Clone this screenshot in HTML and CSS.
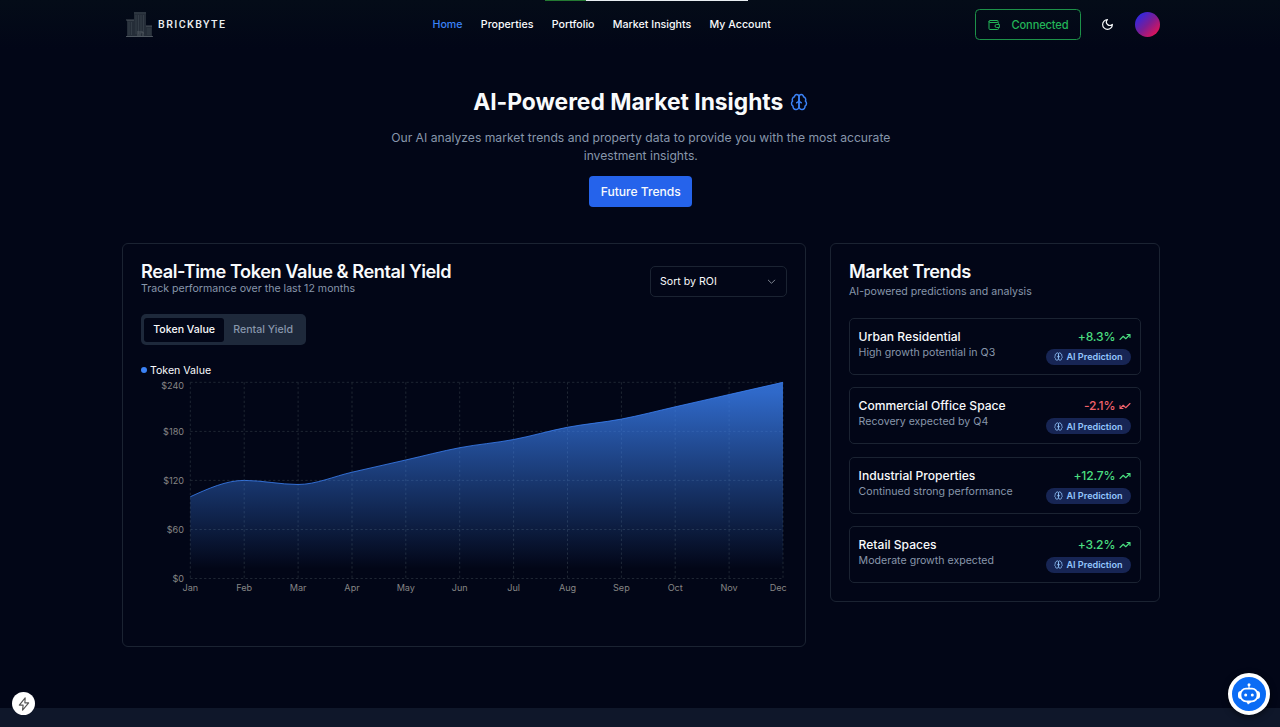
FILE: index.html
```
<!DOCTYPE html>
<html lang="en">
<head>
<meta charset="utf-8">
<title>BrickByte – Market Insights</title>
<link rel="stylesheet" href="styles.css">
</head>
<body>
<svg class="defs" width="0" height="0" aria-hidden="true">
  <symbol id="brain" viewBox="0 0 24 24"><path d="M12 5a3 3 0 1 0-5.997.125 4 4 0 0 0-2.526 5.77 4 4 0 0 0 .556 6.588A4 4 0 1 0 12 18Z"/><path d="M12 5a3 3 0 1 1 5.997.125 4 4 0 0 1 2.526 5.77 4 4 0 0 1-.556 6.588A4 4 0 1 1 12 18Z"/><path d="M15 13a4.5 4.5 0 0 1-3-4 4.5 4.5 0 0 1-3 4"/></symbol>
  <symbol id="up" viewBox="0 0 24 24"><path d="M22 7 13.500 15.500l-5-5L2 17M16 7h6v6"/></symbol>
  <symbol id="down" viewBox="0 0 24 24"><path d="M22 7 13.500 15.500l-5-5L2 17M8 17H2v-6"/></symbol>
</svg>
<div class="progress"><span class="progress-done"></span><span class="progress-rest"></span></div>
<header class="header">
  <div class="logo">
    <svg width="28" height="26" viewBox="0 0 28 26">
      <path class="b1" d="M1 8h7v17H1zM8 0h12v25H8zM20 14h6v11h-6z"/>
      <path class="b2" d="M8 1h12M10 3v19M12.500 3v19M15 3v19M17.500 3v19M3 10v13M5.500 10v13M22 16v7M24 16v7"/>
      <path class="b3" d="M0 8h8M20 14h6M0 24.500h27M11 20h6v4M12 21v3M14 21v3"/>
    </svg>
    <span class="brand">BRICKBYTE</span>
  </div>
  <nav class="nav"><a class="active">Home</a><a>Properties</a><a>Portfolio</a><a>Market Insights</a><a>My Account</a></nav>
  <div class="tools">
    <div class="connected">
      <svg class="icon" width="12" height="12" viewBox="0 0 24 24"><path d="M20 7V4a1 1 0 0 0-1-1H4a2 2 0 0 0-2 2c0 1.500 1 2 2 2h15a2 2 0 0 1 2 2v2M2 5v14a2 2 0 0 0 2 2h15a2 2 0 0 0 2-2v-2M22 11h-5a3 3 0 0 0 0 6h5z"/></svg>
      <span>Connected</span>
    </div>
    <svg class="icon moon" width="13" height="13" viewBox="0 0 24 24"><path d="M12 3a6 6 0 0 0 9 9 9 9 0 1 1-9-9Z"/></svg>
    <div class="avatar"></div>
  </div>
</header>
<main class="main">
  <section class="hero">
    <h1>AI-Powered Market Insights <svg class="icon blue" width="18" height="18"><use href="#brain"/></svg></h1>
    <p>Our AI analyzes market trends and property data to provide you with the most accurate<br>investment insights.</p>
    <button class="primary">Future Trends</button>
  </section>
  <div class="columns">
    <section class="card chart-card">
      <div class="card-head">
        <div><h2>Real-Time Token Value &amp; Rental Yield</h2><p class="sub">Track performance over the last 12 months</p></div>
        <div class="select"><span>Sort by ROI</span><svg class="icon" width="11" height="11" viewBox="0 0 24 24"><path d="m5 9 7 7 7-7"/></svg></div>
      </div>
      <div class="tabs"><span class="tab on">Token Value</span><span class="tab">Rental Yield</span></div>
      <div class="legend"><i></i>Token Value</div>
      <svg class="chart" width="646" height="220" viewBox="141 377 646 220">
        <defs><linearGradient id="fill" x1="0" y1="1" x2="0" y2="0"><stop offset="5%" stop-color="#3b82f6" stop-opacity=".8"/><stop offset="95%" stop-color="#3b82f6" stop-opacity="0"/></linearGradient></defs>
        <g class="grid"><path d="M190.300 382.300H783M190.300 431.400H783M190.300 480.400H783M190.300 529.500H783M190.300 578.500H783"/><path d="M190.300 382.300v196.200M244.200 382.300v196.200M298.100 382.300v196.200M352 382.300v196.200M405.800 382.300v196.200M459.700 382.300v196.200M513.600 382.300v196.200M567.500 382.300v196.200M621.400 382.300v196.200M675.200 382.300v196.200M729.100 382.300v196.200M783 382.300v196.200"/></g>
        <g transform="translate(190.300 578.500) scale(53.880 -.8175)">
          <path fill="url(#fill)" d="M0,100C.333,110 .667,120 1,120C1.333,120 1.667,115 2,115C2.333,115 2.667,125 3,130C3.333,135 3.667,140 4,145C4.333,150 4.667,155.833 5,160C5.333,164.167 5.667,165.833 6,170C6.333,174.167 6.667,180.833 7,185C7.333,189.167 7.667,190.833 8,195C8.333,199.167 8.667,205 9,210C9.333,215 9.667,220 10,225L11,240V0H0Z"/>
          <path class="line" d="M0,100C.333,110 .667,120 1,120C1.333,120 1.667,115 2,115C2.333,115 2.667,125 3,130C3.333,135 3.667,140 4,145C4.333,150 4.667,155.833 5,160C5.333,164.167 5.667,165.833 6,170C6.333,174.167 6.667,180.833 7,185C7.333,189.167 7.667,190.833 8,195C8.333,199.167 8.667,205 9,210C9.333,215 9.667,220 10,225L11,240"/>
        </g>
        <g class="ylab"><text x="184" y="388.500">$240</text><text x="184" y="434.500">$180</text><text x="184" y="483.500">$120</text><text x="184" y="532.500">$60</text><text x="184" y="581.700">$0</text></g>
        <g class="xlab"><text x="190.300" y="591.300">Jan</text><text x="244.200" y="591.300">Feb</text><text x="298.100" y="591.300">Mar</text><text x="352" y="591.300">Apr</text><text x="405.800" y="591.300">May</text><text x="459.700" y="591.300">Jun</text><text x="513.600" y="591.300">Jul</text><text x="567.500" y="591.300">Aug</text><text x="621.400" y="591.300">Sep</text><text x="675.200" y="591.300">Oct</text><text x="729.100" y="591.300">Nov</text><text x="778.200" y="591.300">Dec</text></g>
      </svg>
    </section>
    <section class="card trends">
      <h2>Market Trends</h2>
      <p class="sub">AI-powered predictions and analysis</p>
      <div class="list">
        <article class="item"><div><h3>Urban Residential</h3><p>High growth potential in Q3</p></div><div class="right"><span class="pct">+8.3% <svg class="icon" width="12" height="12"><use href="#up"/></svg></span><span class="badge"><svg class="icon" width="9" height="9"><use href="#brain"/></svg>AI Prediction</span></div></article>
        <article class="item"><div><h3>Commercial Office Space</h3><p>Recovery expected by Q4</p></div><div class="right"><span class="pct neg">-2.1% <svg class="icon" width="12" height="12"><use href="#down"/></svg></span><span class="badge"><svg class="icon" width="9" height="9"><use href="#brain"/></svg>AI Prediction</span></div></article>
        <article class="item"><div><h3>Industrial Properties</h3><p>Continued strong performance</p></div><div class="right"><span class="pct">+12.7% <svg class="icon" width="12" height="12"><use href="#up"/></svg></span><span class="badge"><svg class="icon" width="9" height="9"><use href="#brain"/></svg>AI Prediction</span></div></article>
        <article class="item"><div><h3>Retail Spaces</h3><p>Moderate growth expected</p></div><div class="right"><span class="pct">+3.2% <svg class="icon" width="12" height="12"><use href="#up"/></svg></span><span class="badge"><svg class="icon" width="9" height="9"><use href="#brain"/></svg>AI Prediction</span></div></article>
      </div>
    </section>
  </div>
</main>
<footer class="footer"></footer>
<div class="bolt"><svg class="icon" width="14" height="14" viewBox="0 0 24 24"><path d="M14 1.500 4 14h6.500L9.500 22.500 20 10h-6.500z"/></svg></div>
<div class="bot">
  <svg width="24" height="24" viewBox="0 0 24 24"><path class="stroke" d="M12 3.500v3"/><circle cx="12" cy="2.800" r="1.500"/><rect x="1" y="9" width="22" height="8" rx="3"/><rect class="face" x="3.500" y="6.700" width="17" height="12.600" rx="5.500"/><path d="M9 19h7l-5 3.500z"/><circle cx="8.700" cy="13" r="1.500"/><circle cx="15.300" cy="13" r="1.500"/></svg>
</div>
</body>
</html>
```
FILE: styles.css
```
* { box-sizing: border-box; margin: 0; padding: 0; }
body {
  height: 727px;
  overflow: hidden;
  display: flex;
  flex-direction: column;
  background: #020617;
  color: #f8fafc;
  font-family: Inter, "Liberation Sans", sans-serif;
  font-size: 10.6px;
}
.defs { position: absolute; }
.icon { fill: none; stroke: currentColor; stroke-width: 2; stroke-linecap: round; stroke-linejoin: round; }
.progress { position: absolute; top: 0; left: 545px; width: 203px; height: 1px; display: flex; }
.progress-done { width: 41px; background: #247a32; }
.progress-rest { flex: 1; background: #e8eef2; }

.header {
  height: 49px;
  padding: 0 120px 0 126px;
  display: grid;
  grid-template-columns: 306.5px 1fr auto;
  align-items: center;
  background: linear-gradient(#040c18, #020617);
}
.logo { display: flex; align-items: center; gap: 4px; }
.b1 { fill: #252d38; }
.b2 { fill: none; stroke: #39414b; stroke-width: .8; }
.b3 { fill: none; stroke: #5b626b; stroke-width: .8; }
.brand { font: 500 10.6px Roboto, sans-serif; letter-spacing: 1.45px; color: #eceef0; }
.nav { display: flex; gap: 18.3px; font-size: 10.65px; font-weight: 500; white-space: nowrap; }
.active { color: #3b82f6; }
.tools { display: flex; align-items: center; }
.connected {
  width: 106px; height: 31px;
  display: flex; align-items: center; justify-content: center; gap: 12px;
  border: 1px solid #1d9149; border-radius: 4.500px;
  color: #22b558; font-size: 11.1px; font-weight: 500; letter-spacing: -.14px;
}
.moon { margin-left: 20px; stroke-width: 2.2; }
.avatar { margin-left: 21px; width: 25px; height: 25px; border-radius: 50%; background: linear-gradient(135deg, #2929e8 10%, #7b1d94 50%, #ed1250 92%); }

.main { flex: 1; padding: 0 120.500px 0 122px; }
.hero { display: flex; flex-direction: column; align-items: center; padding-top: 39px; height: 194px; text-align: center; }
h1 { display: flex; align-items: center; gap: 7px; font-size: 22.8px; font-weight: 700; line-height: 27px; letter-spacing: -.01px; }
.blue { color: #3b82f6; }
.hero p { margin-top: 13.600px; font-size: 12.15px; line-height: 18.2px; color: #8796ab; }
.primary { margin-top: 11px; width: 103px; height: 31px; border: 0; border-radius: 4px; background: #2563eb; color: #f8fafc; font: 500 12.1px Inter, sans-serif; }

.columns { display: grid; grid-template-columns: 684px 330px; gap: 24px; align-items: start; }
.card { border: 1px solid #1b2332; border-radius: 6px; padding: 18px; }
.chart-card { height: 404px; }
h2 { font-size: 18.2px; font-weight: 600; line-height: 18px; letter-spacing: -.44px; }
.sub { margin-top: 1px; font-size: 10.6px; line-height: 15px; color: #8796ab; }
.card-head { display: flex; justify-content: space-between; align-items: flex-start; height: 52.4px; }
.select {
  width: 137px; height: 31px; margin-top: 3.600px; padding: 0 9.500px 0 9px;
  display: flex; align-items: center; justify-content: space-between;
  border: 1px solid #1b2332; border-radius: 5px;
}
.select .icon { color: #8a919d; }
.tabs { display: flex; width: 164.500px; height: 30.600px; padding: 3.300px; border-radius: 5px; background: #1e293b; font-weight: 500; }
.tab { width: 78.500px; display: flex; align-items: center; justify-content: center; color: #8796ab; }
.on { width: 80px; border-radius: 3px; background: #020617; color: #f8fafc; }
.legend { display: flex; align-items: center; gap: 3px; height: 13px; margin-top: 19px; }
.legend i { width: 6px; height: 6px; border-radius: 50%; background: #3b82f6; }
.chart { display: block; }
.grid { fill: none; stroke: #222a37; stroke-width: .9; stroke-dasharray: 2.3 2.3; }
.line { fill: none; stroke: #3b82f6; stroke-width: .8; vector-effect: non-scaling-stroke; }
.ylab, .xlab { fill: #858585; font-size: 9.100px; }
.ylab { text-anchor: end; }
.xlab { text-anchor: middle; }

.trends { height: 359px; }
.trends .sub { margin-top: 4px; }
.list { display: flex; flex-direction: column; gap: 12.400px; margin-top: 18.800px; }
.item { height: 57px; padding: 9px 9px 9px 8.600px; display: flex; justify-content: space-between; border: 1px solid #1b2332; border-radius: 5px; }
h3 { font-size: 12.100px; line-height: 18px; font-weight: 500; }
.item p { color: #8796ab; line-height: 14px; }
.right { display: flex; flex-direction: column; align-items: flex-end; gap: 3px; }
.pct { display: flex; align-items: center; gap: 3.800px; color: #4ade80; font-size: 12.100px; line-height: 18px; font-weight: 500; letter-spacing: -.2px; }
.pct .icon { stroke-width: 2.200; }
.neg { color: #f0616a; }
.badge { width: 85px; height: 16px; border-radius: 8px; display: flex; align-items: center; justify-content: center; gap: 3px; background: #172554; color: #93c5fd; font-size: 9.100px; font-weight: 600; white-space: nowrap; }

.footer { height: 19px; background: #0f172a; }
.bolt { position: absolute; left: 12px; top: 692px; width: 23px; height: 23px; border-radius: 50%; background: #fff; color: #555; display: grid; place-items: center; }
.bot { position: absolute; left: 1228px; top: 673px; width: 42px; height: 42px; border-radius: 50%; border: 4px solid #fff; background: #0b6cf5; display: grid; place-items: center; box-shadow: 0 2px 6px #0008; fill: #fff; }
.stroke { stroke: #fff; stroke-width: 1.200; }
.face { fill: #0b6cf5; stroke: #fff; stroke-width: 1.800; }
```
